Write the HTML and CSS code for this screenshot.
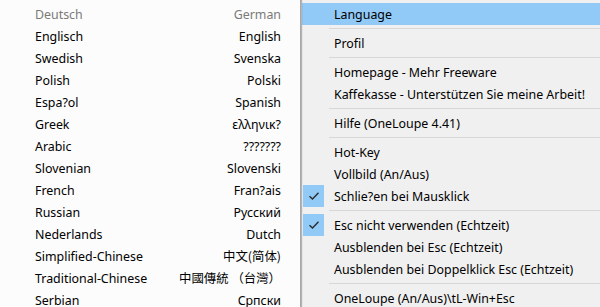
FILE: index.html
```html
<!DOCTYPE html>
<html>
<head>
<meta charset="utf-8">
<link rel="stylesheet" href="styles.css">
</head>
<body>
<div class="screen">
  <div class="submenu">
    <div class="sub-item disabled"><span>Deutsch</span><span>German</span></div>
    <div class="sub-item"><span>Englisch</span><span>English</span></div>
    <div class="sub-item"><span>Swedish</span><span>Svenska</span></div>
    <div class="sub-item"><span>Polish</span><span>Polski</span></div>
    <div class="sub-item"><span>Espa?ol</span><span>Spanish</span></div>
    <div class="sub-item"><span>Greek</span><span>ελληνικ?</span></div>
    <div class="sub-item"><span>Arabic</span><span>???????</span></div>
    <div class="sub-item"><span>Slovenian</span><span>Slovenski</span></div>
    <div class="sub-item"><span>French</span><span>Fran?ais</span></div>
    <div class="sub-item"><span>Russian</span><span>Русский</span></div>
    <div class="sub-item"><span>Nederlands</span><span>Dutch</span></div>
    <div class="sub-item"><span>Simplified-Chinese</span><span class="cjk">中文(简体)</span></div>
    <div class="sub-item"><span>Traditional-Chinese</span><span class="cjk">中國傳統 （台灣）</span></div>
    <div class="sub-item"><span>Serbian</span><span>Српски</span></div>
  </div>
  <div class="menu">
    <div class="item active"><span class="check"></span><span>Language</span></div>
    <div class="sep"></div>
    <div class="item"><span class="check"></span><span>Profil</span></div>
    <div class="sep"></div>
    <div class="item"><span class="check"></span><span>Homepage - Mehr Freeware</span></div>
    <div class="item"><span class="check"></span><span>Kaffekasse - Unterstützen Sie meine Arbeit!</span></div>
    <div class="sep"></div>
    <div class="item"><span class="check"></span><span>Hilfe (OneLoupe 4.41)</span></div>
    <div class="sep"></div>
    <div class="item"><span class="check"></span><span>Hot-Key</span></div>
    <div class="item"><span class="check"></span><span>Vollbild (An/Aus)</span></div>
    <div class="item"><span class="check on"><svg width="12" height="10" viewBox="0 0 12 10"><path d="M1.5 5.2 L4.5 8 L10.5 1.8" fill="none" stroke="#2b2b2b" stroke-width="1.4"/></svg></span><span>Schlie?en bei Mausklick</span></div>
    <div class="sep"></div>
    <div class="item"><span class="check on"><svg width="12" height="10" viewBox="0 0 12 10"><path d="M1.5 5.2 L4.5 8 L10.5 1.8" fill="none" stroke="#2b2b2b" stroke-width="1.4"/></svg></span><span>Esc nicht verwenden (Echtzeit)</span></div>
    <div class="item"><span class="check"></span><span>Ausblenden bei Esc (Echtzeit)</span></div>
    <div class="item"><span class="check"></span><span>Ausblenden bei Doppelklick Esc (Echtzeit)</span></div>
    <div class="sep"></div>
    <div class="item"><span class="check"></span><span>OneLoupe (An/Aus)\tL-Win+Esc</span></div>
  </div>
</div>
</body>
</html>
```
FILE: styles.css
```css
html, body {
  margin: 0;
  padding: 0;
  background: #f0f0f0;
}
.screen {
  display: flex;
  width: 600px;
  height: 307px;
  overflow: hidden;
  font-family: "Noto Sans", "Noto Sans CJK SC", sans-serif;
  font-size: 12.4px;
  color: #000;
}
.submenu {
  position: relative;
  z-index: 1;
  width: 300px;
  flex: none;
  background: #fcfcfc;
  padding-top: 3px;
  border-right: 1px solid #a8a8a8;
  box-shadow: 1px 0 1px rgba(0, 0, 0, 0.25);
}
.sub-item {
  height: 22px;
  display: flex;
  align-items: center;
  justify-content: space-between;
  padding: 0 19px 0 35px;
}
.sub-item.disabled {
  color: #7a7a7a;
}
.cjk {
  font-family: "Noto Sans CJK SC", sans-serif;
  font-size: 12.4px;
}
.menu {
  flex: 1;
  background: #f0f0f0;
  padding-top: 3px;
  padding-left: 1px;
}
.item {
  height: 22px;
  display: flex;
  align-items: center;
}
.item.active {
  background: #91c9f7;
}
.check {
  width: 21px;
  height: 22px;
  margin-left: 1px;
  margin-right: 10px;
  display: flex;
  align-items: center;
  justify-content: center;
}
.check.on {
  background: #91c9f7;
}
.sep {
  height: 1px;
  margin: 3px 0 3px 27px;
  background: #d7d7d7;
}
```
